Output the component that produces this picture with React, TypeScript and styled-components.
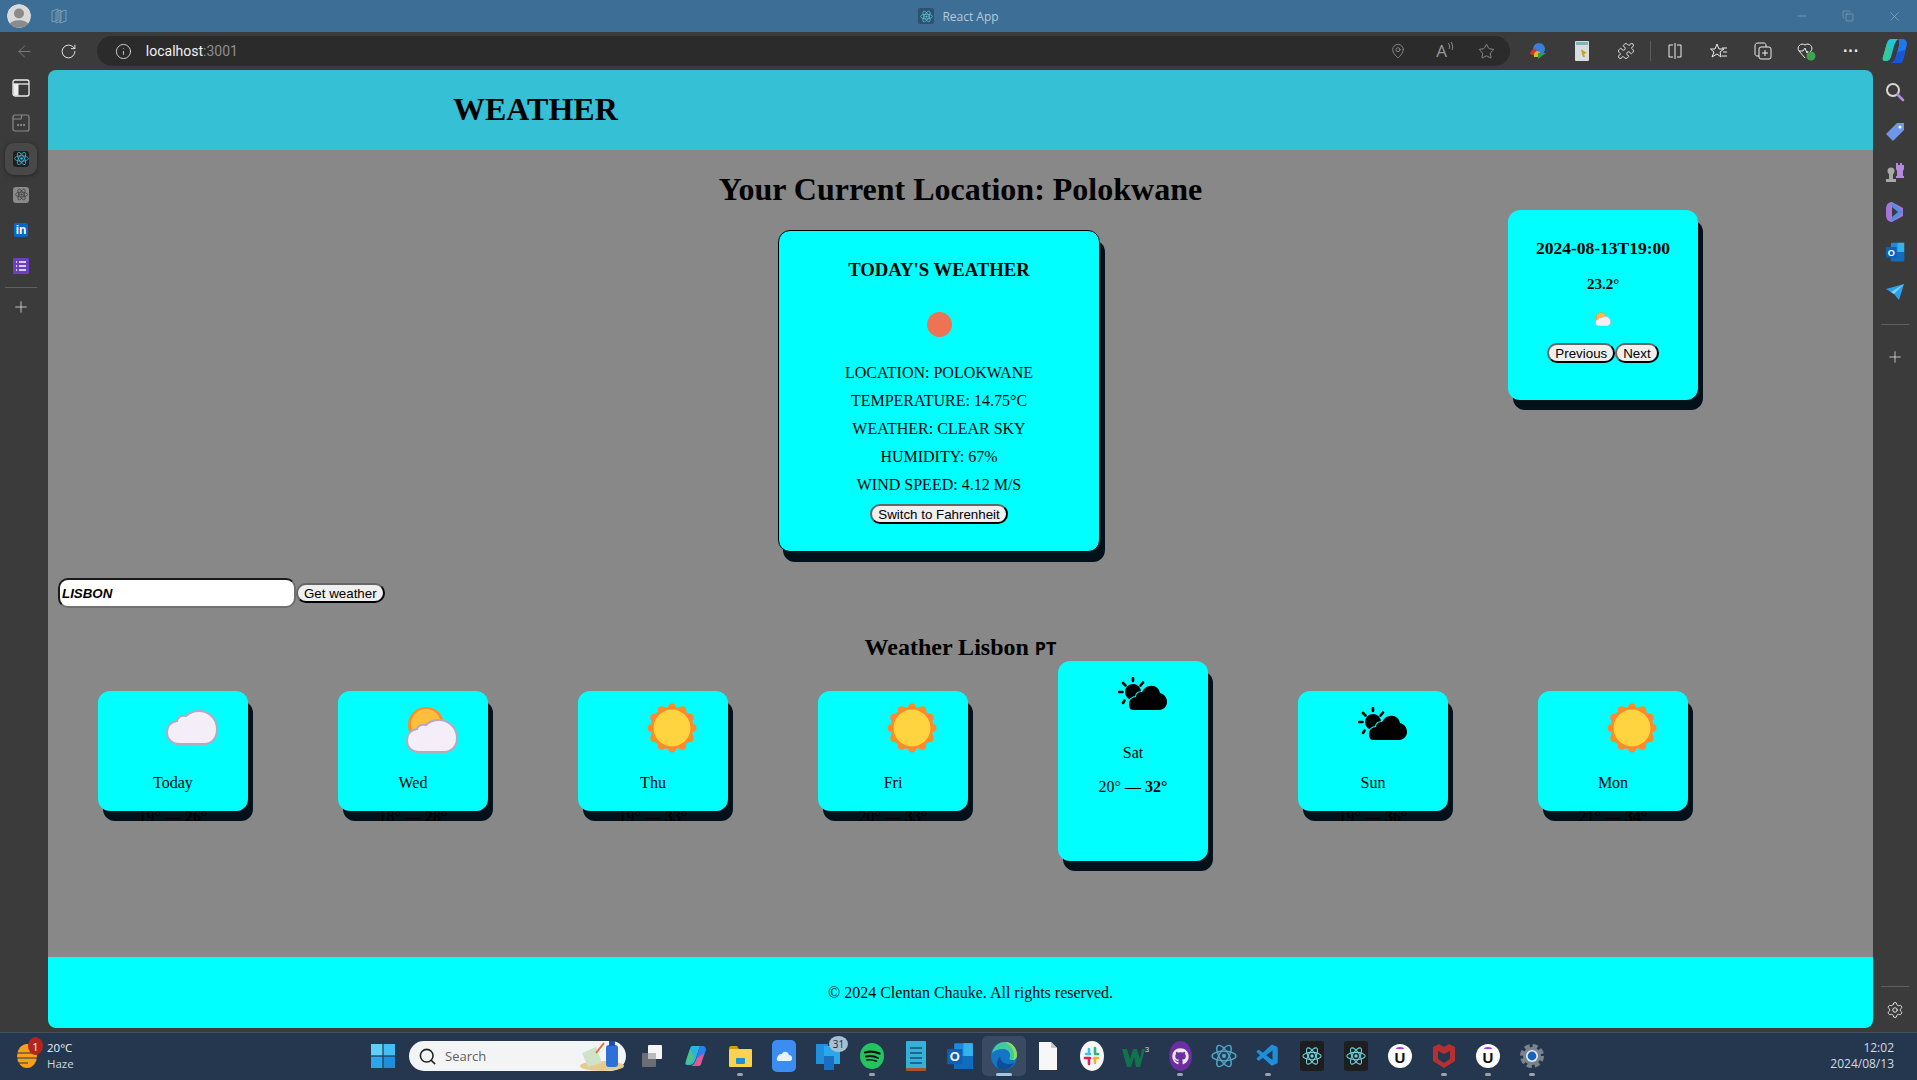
import React from "react";
import styled, { createGlobalStyle } from "styled-components";
import {
  ArrowLeft,
  RotateCw,
  Info,
  MapPin,
  Star,
  Puzzle,
  Plus,
  Settings,
  Search,
  Minus,
  X,
  Copy,
} from "lucide-react";
import { FaGithub } from "react-icons/fa";
import { VscVscode } from "react-icons/vsc";

const GlobalStyle = createGlobalStyle`
  html, body {
    margin: 0;
    padding: 0;
    overflow: hidden;
    background: #3b3b3b;
  }
  * { box-sizing: border-box; }
`;

const Cloud = () => (
  <svg width="52" height="35" viewBox="0 0 52 35">
    <path
      d="M13 34H38C46 34 51 28 51 19C51 9 43 1 33 1C27 1 23 3 20 6C15 5 12 7 11 11C5 12 1 16 1 23C1 29 6 34 13 34Z"
      fill="#f3eef8"
      stroke="#b9a8bf"
      strokeWidth="2"
    />
  </svg>
);

const sunPetals = Array.from({ length: 12 }, (_, i) => (i * Math.PI) / 6);

const Sun = () => (
  <svg width="50" height="50" viewBox="0 0 50 50">
    <circle cx="25" cy="25" r="21.5" fill="#ff8a2b" />
    {sunPetals.map((a) => (
      <circle
        key={a}
        cx={25 + 20.5 * Math.sin(a)}
        cy={25 - 20.5 * Math.cos(a)}
        r="4"
        fill="#ff8a2b"
      />
    ))}
    <circle cx="25" cy="25" r="18.5" fill="#ffd43f" />
  </svg>
);

const SunCloud = ({ size = 52 }: { size?: number }) => (
  <svg width={size} height={(size * 47) / 52} viewBox="0 0 52 47">
    <circle cx="20" cy="19" r="18" fill="#ff8a2b" />
    <circle cx="20" cy="18" r="15" fill="#fbbf3c" />
    <path
      d="M12 46H38C46 46 51 40 51 32C51 22 43 14 33 14C27 14 23 16 20 19C15 18 12 20 11 23C5 24 1 28 1 35C1 41 6 46 12 46Z"
      fill="#f3eef8"
      stroke="#b9a8bf"
      strokeWidth="2"
    />
  </svg>
);

const DarkSunCloud = () => (
  <svg width="50" height="34" viewBox="0 0 50 34">
    <g stroke="#000" strokeWidth="2.6" strokeLinecap="round">
      <path d="M15 1V4M5 6L7.5 8.5M25 5.5L22.5 8.5M1 15H4.5M5 26L6.5 23.5" />
    </g>
    <circle cx="15" cy="15" r="8" fill="#000" />
    <path
      d="M15 33H41C46 33 49 29 49 25C49 20 46 17 42 16C41 11 37 8 32 9C28 9 26 12 24 15C20 15 18 17 18 20C14 20 11 23 11 27C11 30 12 33 15 33Z"
      fill="#000"
      stroke="#0ff"
      strokeWidth="2"
      paintOrder="stroke"
    />
  </svg>
);

const ReactGlyph = ({ color = "#4fa8c9", size = 24 }: { color?: string; size?: number }) => (
  <svg width={size} height={size} viewBox="0 0 24 24" fill="none" stroke={color} strokeWidth="1.3">
    <ellipse cx="12" cy="12" rx="11" ry="4.4" />
    <ellipse cx="12" cy="12" rx="11" ry="4.4" transform="rotate(60 12 12)" />
    <ellipse cx="12" cy="12" rx="11" ry="4.4" transform="rotate(120 12 12)" />
    <circle cx="12" cy="12" r="2" fill={color} stroke="none" />
  </svg>
);

const WinLogo = () => (
  <svg width="24" height="24" viewBox="0 0 24 24">
    <rect x="0" y="0" width="11.4" height="11.4" fill="#5fd0fb" />
    <rect x="12.6" y="0" width="11.4" height="11.4" fill="#45bdf5" />
    <rect x="0" y="12.6" width="11.4" height="11.4" fill="#2ba6ea" />
    <rect x="12.6" y="12.6" width="11.4" height="11.4" fill="#1c8fdd" />
  </svg>
);

const TaskView = () => (
  <svg width="24" height="24" viewBox="0 0 24 24">
    <rect x="2" y="9" width="14" height="14" rx="1" fill="#6b6f75" />
    <rect x="8" y="1" width="14" height="14" rx="1" fill="#f5f5f5" />
    <rect x="8" y="9" width="8" height="6" fill="#b9bbbf" />
  </svg>
);

const CopilotMark = ({ size = 24 }: { size?: number }) => (
  <svg width={size} height={size} viewBox="0 0 24 24">
    <path d="M8 2H16L12 14C11 18 9 21 6 21H3C1 21 1 19 2 17L6 5C6.500 3 7 2 8 2Z" fill="#2bb5d8" />
    <path d="M16 2H19C21 2 22 4 22 6L17 20C16 22 15 22 13 22H7C10 21 11 18 12 15Z" fill="#2a7ff0" />
    <path d="M13 14L20 9L17 20C16 22 15 22 13 22H8C11 20 12 17 13 14Z" fill="#e8568f" />
    <path d="M6 5L10 14L6 20C4 21 2 20 2 17Z" fill="#4cc38a" />
  </svg>
);

const ToolCopilot = () => (
  <svg width="26" height="26" viewBox="0 0 26 26">
    <path d="M9 1H16C14 3 13 5 12 8L9 19C8 22 6 23 4 23H3C1 23 0 21 1 19L5 5C6 2 7 1 9 1Z" fill="#1fc7d4" />
    <path d="M5 5L9 12L7 21C6 23 4 23 3 23C1 23 0 21 1 19Z" fill="#39c79a" />
    <path d="M16 1H20C23 1 25 3 25 6L21 22C20 24 19 25 17 25H9C12 24 13 22 14 19L17 7C17.500 4 17 2 16 1Z" fill="#1e78ee" />
    <path d="M16 14L23 12L21 22C20 24 19 25 17 25H9C12 24 13 22 14 19Z" fill="#1557d6" />
  </svg>
);

const Explorer = () => (
  <svg width="24" height="24" viewBox="0 0 24 24">
    <path d="M1 4C1 3 2 2 3 2H9L11 5H1Z" fill="#d89a10" />
    <rect x="1" y="5" width="23" height="18" rx="1" fill="#fcd34d" />
    <rect x="8" y="14" width="9" height="6" rx="1" fill="#1f8fd8" />
  </svg>
);

const CloudApp = () => (
  <svg width="24" height="32" viewBox="0 0 24 32">
    <rect width="24" height="32" rx="5" fill="#3b8df2" />
    <path d="M6 21H18C21 21 21 15 17 15C16 11 11 11 10 14C6 13 3 20 6 21Z" fill="#e8f2fe" />
  </svg>
);

const TodoApp = () => (
  <svg width="24" height="30" viewBox="0 0 24 30">
    <rect x="0" y="3" width="12" height="20" fill="#1f8fe0" />
    <rect x="8" y="5" width="16" height="18" fill="#2aa8ea" />
    <rect x="8" y="15" width="10" height="14" fill="#1b6fc0" />
  </svg>
);

const Spotify = () => (
  <svg width="26" height="26" viewBox="0 0 26 26" fill="none">
    <ellipse cx="13" cy="13" rx="12" ry="13" fill="#21c45d" />
    <g stroke="#111" strokeLinecap="round">
      <path d="M6 9.500C11 8 16 8.500 20.500 10.500" strokeWidth="2.200" />
      <path d="M7 13.500C11 12.500 15 13 19 15" strokeWidth="1.900" />
      <path d="M8 17C11 16.300 14 16.700 17.500 18.200" strokeWidth="1.600" />
    </g>
  </svg>
);

const Notepad = () => (
  <svg width="20" height="32" viewBox="0 0 20 32">
    <rect y="1" width="20" height="29" rx="1" fill="#37b0d8" />
    <rect y="28" width="20" height="3" fill="#a8532a" />
    <path d="M4 8H16M4 13H16M4 18H16M4 23H16" stroke="#14507a" strokeWidth="1.600" />
  </svg>
);

const Outlook = ({ size = 24 }: { size?: number }) => (
  <svg width={size} height={size} viewBox="0 0 24 24">
    <rect x="7" y="1" width="16" height="22" rx="1" fill="#1a8be0" />
    <rect x="15" y="1" width="8" height="11" fill="#35b1ee" />
    <rect x="7" y="12" width="16" height="11" fill="#0f6cbf" />
    <rect x="1" y="6" width="13" height="13" rx="1" fill="#0f5fb3" />
    <text x="7.500" y="16.500" fontSize="11" fontWeight="700" fill="#fff" textAnchor="middle" fontFamily="Liberation Sans, sans-serif">
      O
    </text>
  </svg>
);

const Edge = () => (
  <svg width="26" height="28" viewBox="0 0 26 28">
    <ellipse cx="13" cy="14" rx="13" ry="14" fill="#1475c4" />
    <path d="M1 11C3 3 9 0 14 0C21 0 26 6 26 13C26 18 21 19 18 17C21 13 18 7 12 7C7 7 3 9 1 11Z" fill="#41c9a0" />
    <path d="M14 0C21 0 26 6 26 13C26 16 24 18 22 18C25 12 22 4 14 0Z" fill="#8fdc5a" />
    <path d="M9 14C9 20 15 24 23 21C20 26 16 28 13 28C6 28 3 22 9 14Z" fill="#0c4f98" />
  </svg>
);

const FileIcon = () => (
  <svg width="18" height="30" viewBox="0 0 18 30">
    <path d="M0 1H12L18 7V29H0Z" fill="#f7f7f7" />
    <path d="M12 1L18 7H12Z" fill="#c9c9c9" />
  </svg>
);

const Slack = () => (
  <svg width="24" height="30" viewBox="0 0 24 30">
    <ellipse cx="12" cy="15" rx="12" ry="15" fill="#f6f6f6" />
    <g strokeWidth="2.600" strokeLinecap="round">
      <path d="M9 8V12M6 13H10" stroke="#36c5f0" />
      <path d="M15 7V12M15 13H18" stroke="#2eb67d" />
      <path d="M15 22V18M18 17H14" stroke="#ecb22e" />
      <path d="M9 23V18M5 17H10" stroke="#e01e5a" />
    </g>
  </svg>
);

const WThree = () => (
  <svg width="28" height="24" viewBox="0 0 28 24">
    <path d="M0 5H5L8 15L11 5H15L18 15L20 5H23L18 23H14L12 13L9 23H5Z" fill="#11734b" />
    <text x="25" y="8" fontSize="8" fill="#cfd8dc" textAnchor="middle" fontFamily="Liberation Sans, sans-serif">
      3
    </text>
  </svg>
);

const GithubApp = () => (
  <GithubBadge>
    <FaGithub size={17} color="#efe7f6" />
  </GithubBadge>
);

const ReactTile = () => (
  <ReactBox>
    <ReactGlyph color="#6fd3e0" size={20} />
  </ReactBox>
);

const Udemy = () => (
  <UdemyBadge>
    <UdemyHat />
    U
  </UdemyBadge>
);

const Mcafee = () => (
  <svg width="22" height="24" viewBox="0 0 22 24">
    <path d="M0 3L6 0L11 3L16 0L22 3V17L11 24L0 17Z" fill="#b82f2f" />
    <path d="M5 7L11 10L17 7V15L11 19L5 15Z" fill="#25364f" />
  </svg>
);

const GearApp = () => (
  <svg width="24" height="24" viewBox="0 0 24 24">
    <circle cx="12" cy="12" r="10" fill="none" stroke="#7b838d" strokeWidth="4" strokeDasharray="5 2.900" />
    <circle cx="12" cy="12" r="9" fill="#7b838d" />
    <circle cx="12" cy="12" r="6" fill="#e8edf2" />
    <circle cx="12" cy="12" r="4.400" fill="#1565c0" />
  </svg>
);

const taskApps = [
  { id: "view", icon: <TaskView /> },
  { id: "copilot", icon: <CopilotMark /> },
  { id: "files", icon: <Explorer />, running: true },
  { id: "cloud", icon: <CloudApp /> },
  { id: "todo", icon: <TodoApp />, badge: "31" },
  { id: "spotify", icon: <Spotify />, running: true },
  { id: "notes", icon: <Notepad /> },
  { id: "outlook", icon: <Outlook size={28} /> },
  { id: "edge", icon: <Edge />, running: true, active: true },
  { id: "file", icon: <FileIcon /> },
  { id: "slack", icon: <Slack /> },
  { id: "w3", icon: <WThree /> },
  { id: "github", icon: <GithubApp />, running: true },
  { id: "react", icon: <ReactGlyph size={26} /> },
  { id: "code", icon: <VscVscode size={26} color="#1e8fd8" />, running: true },
  { id: "react2", icon: <ReactTile /> },
  { id: "react3", icon: <ReactTile /> },
  { id: "udemy", icon: <Udemy /> },
  { id: "mcafee", icon: <Mcafee />, running: true },
  { id: "udemy2", icon: <Udemy />, running: true },
  { id: "gear", icon: <GearApp />, running: true },
];

const forecast = [
  { day: "Today", low: 19, high: 26, icon: <Cloud />, left: 68, top: 7 },
  { day: "Wed", low: 18, high: 28, icon: <SunCloud />, left: 68, top: 3 },
  { day: "Thu", low: 19, high: 33, icon: <Sun />, left: 69, top: 0 },
  { day: "Fri", low: 20, high: 33, icon: <Sun />, left: 69, top: 0 },
  { day: "Sat", low: 20, high: 32, icon: <DarkSunCloud />, left: 60, top: 4, hovered: true },
  { day: "Sun", low: 19, high: 36, icon: <DarkSunCloud />, left: 60, top: 4 },
  { day: "Mon", low: 21, high: 34, icon: <Sun />, left: 69, top: 0 },
];

const leftRail = [
  <svg key="a" width="18" height="18" viewBox="0 0 18 18" fill="none">
    <rect x="1" y="1" width="16" height="16" rx="2" stroke="#eee" strokeWidth="1.300" />
    <path d="M1 5H17" stroke="#eee" strokeWidth="1.300" />
    <rect x="1.500" y="5" width="5" height="11.500" fill="#eee" />
  </svg>,
  <svg key="b" width="18" height="18" viewBox="0 0 18 18" fill="none">
    <rect x="1" y="1" width="16" height="16" rx="2" stroke="#8a8a8a" strokeWidth="1.200" />
    <path d="M1 5H9L10 1" stroke="#8a8a8a" strokeWidth="1.200" />
    <path d="M5 11H7M8 11H10M11 11H13" stroke="#9a9a9a" strokeWidth="1.500" />
  </svg>,
];

const App = () => {
  return (
    <Desktop>
      <GlobalStyle />
      <TitleBar>
        <TitleLeft>
          <Avatar>
            <svg width="24" height="24" viewBox="0 0 24 24">
              <circle cx="12" cy="12" r="12" fill="#d9d9d9" />
              <circle cx="12" cy="9.500" r="5" fill="#8b8b8b" />
              <path d="M3 20C5 15 19 15 21 20C17 25 7 25 3 20Z" fill="#8b8b8b" />
            </svg>
          </Avatar>
          <svg width="18" height="18" viewBox="0 0 18 18" fill="none" stroke="#7f9bb4" strokeWidth="1">
            <path d="M2 4L8 2V13L2 15ZM6 5L11 3V14L6 16ZM10 5L16 3V14L10 16Z" />
          </svg>
        </TitleLeft>
        <TitleCenter>
          <FaviconBox>
            <ReactGlyph color="#62c6dc" size={13} />
          </FaviconBox>
          React App
        </TitleCenter>
        <WindowControls>
          <WindowButton>
            <Minus size={14} strokeWidth={1} />
          </WindowButton>
          <WindowButton>
            <Copy size={12} strokeWidth={1} />
          </WindowButton>
          <WindowButton>
            <X size={15} strokeWidth={1} />
          </WindowButton>
        </WindowControls>
      </TitleBar>

      <Toolbar>
        <NavButton>
          <ArrowLeft size={19} strokeWidth={1} color="#8c8c8c" />
        </NavButton>
        <NavButton>
          <RotateCw size={17} strokeWidth={1.300} color="#f2f2f2" />
        </NavButton>
        <AddressBar>
          <Info size={17} strokeWidth={1.200} color="#e4e4e4" />
          <Url>
            localhost<UrlPort>:3001</UrlPort>
          </Url>
          <AddressIcons>
            <MapPin size={16} strokeWidth={1.200} color="#999" />
            <ReadAloud>
              A
              <svg width="7" height="10" viewBox="0 0 7 10" fill="none" stroke="#999" strokeWidth="0.900">
                <path d="M1 1C3 3 3 5 2 7M4 0C6 3 6 6 5 8" />
              </svg>
            </ReadAloud>
            <Star size={17} strokeWidth={1.200} color="#999" />
          </AddressIcons>
        </AddressBar>
        <ToolIcons>
          <ToolSlot>
            <svg width="18" height="18" viewBox="0 0 18 18">
              <circle cx="10" cy="7" r="6" fill="#3b7dd8" />
              <path d="M1 12C2 7 6 6 8 7L5 13Z" fill="#d8362a" />
              <path d="M5 15C4 10 8 8 11 10L9 15Z" fill="#e4b42a" />
              <path d="M9 17L17 11L9 11Z" fill="#2ea043" />
            </svg>
          </ToolSlot>
          <ToolSlot>
            <svg width="14" height="20" viewBox="0 0 14 20">
              <rect width="14" height="20" rx="1" fill="#d7dde0" />
              <rect x="1" y="1" width="12" height="3" fill="#7fb4b8" />
              <path d="M6 8L12 12L9 13L10 16L8 16L7 13Z" fill="#c9a416" />
            </svg>
          </ToolSlot>
          <ToolSlot>
            <Puzzle size={18} strokeWidth={1.200} color="#eee" />
          </ToolSlot>
          <ToolDivider />
          <ToolSlot>
            <svg width="16" height="16" viewBox="0 0 16 16" fill="none" stroke="#eee" strokeWidth="1">
              <path d="M6 2H2V14H6M10 2H14V14H10M8 0V16" />
            </svg>
          </ToolSlot>
          <ToolSlot>
            <svg width="18" height="18" viewBox="0 0 18 18" fill="none" stroke="#eee" strokeWidth="1">
              <path d="M7 2L9 7H14L10 10L11 15L7 12L2 15L4 10L0.500 7H5Z" />
              <path d="M12 6H17M13 10H17M12 14H17" />
            </svg>
          </ToolSlot>
          <ToolSlot>
            <svg width="18" height="18" viewBox="0 0 18 18" fill="none" stroke="#eee" strokeWidth="1">
              <rect x="5" y="5" width="12" height="12" rx="2" />
              <path d="M11 8V14M8 11H14M5 14H3C2 14 1 13 1 12V4C1 2 2 1 4 1H10C11 1 12 2 12 3V5" />
            </svg>
          </ToolSlot>
          <ToolSlot>
            <svg width="19" height="19" viewBox="0 0 19 19" fill="none">
              <path d="M8 16L2 9C-1 5 4 0 8 3C12 0 17 5 14 9L13 10" stroke="#eee" />
              <path d="M2 9H6L8 6L10 11L11 9" stroke="#eee" />
              <circle cx="14" cy="14" r="4.500" fill="#3fa34d" />
            </svg>
          </ToolSlot>
          <ToolSlot>
            <Dots>···</Dots>
          </ToolSlot>
          <ToolSlot>
            <ToolCopilot />
          </ToolSlot>
        </ToolIcons>
      </Toolbar>

      <Middle>
        <LeftRail>
          {leftRail.map((icon, i) => (
            <RailCell key={i}>{icon}</RailCell>
          ))}
          <RailCell>
            <ActiveTile>
              <ReactBox $small>
                <ReactGlyph color="#45b5d8" size={15} />
              </ReactBox>
            </ActiveTile>
          </RailCell>
          <RailCell>
            <ChatTile>
              <ReactGlyph color="#3a3a3a" size={13} />
            </ChatTile>
          </RailCell>
          <RailCell>
            <LinkedTile>in</LinkedTile>
          </RailCell>
          <RailCell>
            <svg width="16" height="16" viewBox="0 0 16 16">
              <rect width="16" height="16" rx="1" fill="#6a3fc0" />
              <path d="M6 4H13M6 8H13M6 12H13" stroke="#fff" strokeWidth="1.500" />
              <path d="M3 4H4M3 8H4M3 12H4" stroke="#fff" strokeWidth="1.500" />
            </svg>
          </RailCell>
          <RailRule />
          <Plus size={18} strokeWidth={1} color="#eee" />
        </LeftRail>

        <Page>
          <Header>
            <Brand>WEATHER</Brand>
          </Header>
          <Main>
            <LocationTitle>Your Current Location: Polokwane</LocationTitle>
            <Panels>
              <TodayCard>
                <TodayTitle>TODAY'S WEATHER</TodayTitle>
                <SunDot />
                <Facts>
                  <Fact>LOCATION: POLOKWANE</Fact>
                  <Fact>TEMPERATURE: 14.75°C</Fact>
                  <Fact>WEATHER: CLEAR SKY</Fact>
                  <Fact>HUMIDITY: 67%</Fact>
                  <Fact>WIND SPEED: 4.12 M/S</Fact>
                </Facts>
                <PillButton>Switch to Fahrenheit</PillButton>
              </TodayCard>
              <HourCard>
                <HourTitle>2024-08-13T19:00</HourTitle>
                <HourTemp>23.2°</HourTemp>
                <HourIcon>
                  <SunCloud size={16} />
                </HourIcon>
                <HourButtons>
                  <PillButton>Previous</PillButton>
                  <PillButton>Next</PillButton>
                </HourButtons>
              </HourCard>
            </Panels>
            <SearchRow>
              <CityInput defaultValue="LISBON" />
              <PillButton>Get weather</PillButton>
            </SearchRow>
            <ForecastTitle>
              Weather Lisbon <Flag>PT</Flag>
            </ForecastTitle>
            <ForecastRow>
              {forecast.map((d) => (
                <DayCard key={d.day} $hovered={d.hovered}>
                  <DayIcon $left={d.left} $top={d.top}>
                    {d.icon}
                  </DayIcon>
                  <DayName>{d.day}</DayName>
                  <DayTemps>
                    {d.low}° — <b>{d.high}°</b>
                  </DayTemps>
                </DayCard>
              ))}
            </ForecastRow>
          </Main>
          <Footer>© 2024 Clentan Chauke. All rights reserved.</Footer>
        </Page>

        <RightRail>
          <SideCell>
            <svg width="20" height="20" viewBox="0 0 20 20" fill="none">
              <circle cx="8" cy="8" r="6" stroke="#d8d8d8" strokeWidth="2" />
              <path d="M12.500 12.500L18 18" stroke="#b58ae0" strokeWidth="2.600" strokeLinecap="round" />
            </svg>
          </SideCell>
          <SideCell>
            <svg width="20" height="20" viewBox="0 0 20 20">
              <path d="M12 1H19V8L8 19L1 12Z" fill="#6f96e8" />
              <circle cx="15" cy="5" r="1.500" fill="#fff" />
            </svg>
          </SideCell>
          <SideCell>
            <svg width="20" height="22" viewBox="0 0 20 22">
              <circle cx="6" cy="10" r="3.500" fill="#a8a8a8" />
              <path d="M4 13H8V18H11V21H1V18H4Z" fill="#a8a8a8" />
              <path d="M11 2H13V4H15V2H17V4H19V2V8L18 10V15H19V17H11V15H12V10L11 8Z" fill="#b58ae0" />
            </svg>
          </SideCell>
          <SideCell>
            <svg width="20" height="22" viewBox="0 0 20 22">
              <path d="M7 1L18 7V15L7 21C3 21 1 18 1 14V8C1 4 3 1 7 1Z" fill="#a874d8" />
              <path d="M7 1L18 11L7 21Z" fill="#4f8fe8" />
              <path d="M7 6L13 11L7 16Z" fill="#3b3b3b" />
            </svg>
          </SideCell>
          <SideCell>
            <Outlook size={20} />
          </SideCell>
          <SideCell>
            <svg width="18" height="16" viewBox="0 0 18 16">
              <path d="M0 5L18 0L13 16L8 10Z" fill="#2aa3ee" />
              <path d="M8 10L18 0L5 8Z" fill="#7fd0f8" />
            </svg>
          </SideCell>
          <SideRule />
          <SideCell>
            <Plus size={18} strokeWidth={1} color="#eee" />
          </SideCell>
          <SettingsBlock>
            <SettingsRule />
            <SideCell>
              <Settings size={18} strokeWidth={1.200} color="#f0f0f0" />
            </SideCell>
          </SettingsBlock>
        </RightRail>
      </Middle>

      <Taskbar>
        <TrayWeather>
          <HazeIcon>
            <svg width="22" height="26" viewBox="0 0 22 26">
              <ellipse cx="11" cy="13" rx="10" ry="12" fill="#f7a11a" />
              <path d="M0 10H18M0 15H22M2 20H12" stroke="#25364f" strokeWidth="1.200" />
            </svg>
            <Badge>1</Badge>
          </HazeIcon>
          <TrayWeatherText>
            <span>20°C</span>
            <TrayDim>Haze</TrayDim>
          </TrayWeatherText>
        </TrayWeather>
        <StartButton>
          <WinLogo />
        </StartButton>
        <SearchPill>
          <Search size={19} strokeWidth={2} color="#222" />
          <SearchLabel>Search</SearchLabel>
          <SearchArt>
            <svg width="46" height="30" viewBox="0 0 46 30">
              <ellipse cx="24" cy="25" rx="22" ry="5" fill="#e8c98f" />
              <path d="M4 12L18 6L24 22L10 26Z" fill="#cfe3c8" />
              <path d="M18 12L26 2" stroke="#e86a33" strokeWidth="2" />
              <rect x="28" y="4" width="12" height="22" rx="3" fill="#2e6fd8" />
              <rect x="31" y="0" width="6" height="5" fill="#1e4fae" />
            </svg>
          </SearchArt>
        </SearchPill>
        <AppStrip>
          {taskApps.map((a) => (
            <TaskSlot key={a.id} $running={a.running} $active={a.active}>
              {a.icon}
              {a.badge && <CountBadge>{a.badge}</CountBadge>}
            </TaskSlot>
          ))}
        </AppStrip>
        <Clock>
          <span>12:02</span>
          <span>2024/08/13</span>
        </Clock>
      </Taskbar>
    </Desktop>
  );
};

export default App;

const Desktop = styled.div`
  width: 1917px;
  height: 1080px;
  display: flex;
  flex-direction: column;
  background: #3b3b3b;
  font-family: "Liberation Serif", "Times New Roman", serif;
`;

const TitleBar = styled.div`
  height: 32px;
  display: grid;
  grid-template-columns: 1fr auto 1fr;
  align-items: center;
  background: #3d6e95;
`;

const TitleLeft = styled.div`
  display: flex;
  align-items: center;
  gap: 19px;
  padding-left: 7px;
`;

const Avatar = styled.div`
  width: 24px;
  height: 24px;
  border-radius: 50%;
  overflow: hidden;
`;

const TitleCenter = styled.div`
  display: flex;
  align-items: center;
  gap: 8px;
  color: #b9c9d8;
  font: 12px "Open Sans", sans-serif;
`;

const FaviconBox = styled.span`
  width: 16px;
  height: 16px;
  display: flex;
  align-items: center;
  justify-content: center;
  background: #2c5270;
  border-radius: 2px;
`;

const WindowControls = styled.div`
  display: flex;
  justify-content: flex-end;
`;

const WindowButton = styled.div`
  width: 46px;
  height: 32px;
  display: flex;
  align-items: center;
  justify-content: center;
  color: #9db4c8;
`;

const Toolbar = styled.div`
  height: 38px;
  display: flex;
  align-items: center;
  padding-left: 3px;
`;

const NavButton = styled.div`
  width: 44px;
  display: flex;
  justify-content: center;
`;

const AddressBar = styled.div`
  width: 1416px;
  height: 30px;
  margin-left: 6px;
  padding: 0 15px 0 18px;
  display: flex;
  align-items: center;
  background: #2b2b2b;
  border-radius: 15px;
`;

const Url = styled.div`
  margin-left: 14px;
  color: #f2f2f2;
  font: 14px Roboto, sans-serif;
`;

const UrlPort = styled.span`
  color: #8f8f8f;
`;

const AddressIcons = styled.div`
  margin-left: auto;
  display: flex;
  align-items: center;
  gap: 30px;
  color: #999;
`;

const ReadAloud = styled.div`
  margin-right: -6px;
  display: flex;
  align-items: flex-start;
  font: 17px "Open Sans", sans-serif;
  line-height: 18px;
`;

const ToolIcons = styled.div`
  display: flex;
  align-items: center;
  margin-left: 6px;
`;

const ToolSlot = styled.div`
  width: 44px;
  display: flex;
  justify-content: center;
`;

const ToolDivider = styled.div`
  width: 1px;
  height: 20px;
  margin: 0 2px;
  background: #5c5c5c;
`;

const Dots = styled.span`
  color: #eee;
  font: bold 16px "Liberation Sans", sans-serif;
`;

const Middle = styled.div`
  height: 962px;
  display: flex;
`;

const LeftRail = styled.div`
  width: 48px;
  padding-right: 6px;
  display: flex;
  flex-direction: column;
  align-items: center;
`;

const RailCell = styled.div`
  width: 100%;
  height: 35.6px;
  display: flex;
  align-items: center;
  justify-content: center;
`;

const ActiveTile = styled.div`
  width: 32px;
  height: 32px;
  display: flex;
  align-items: center;
  justify-content: center;
  background: #484848;
  border-radius: 9px;
  box-shadow: 0 1px 4px rgba(0, 0, 0, 0.4);
`;

const ChatTile = styled.div`
  width: 16px;
  height: 16px;
  display: flex;
  align-items: center;
  justify-content: center;
  background: #8a8a8a;
  border-radius: 3px;
`;

const LinkedTile = styled.div`
  width: 14px;
  height: 14px;
  display: flex;
  align-items: center;
  justify-content: center;
  color: #fff;
  background: #0a66c2;
  border-radius: 2px;
  font: bold 12px "Liberation Sans", sans-serif;
`;

const RailRule = styled.div`
  width: 32px;
  height: 1px;
  margin: 3px 0 10px;
  background: #5f5f5f;
`;

const Page = styled.div`
  width: 1825px;
  height: 958px;
  display: flex;
  flex-direction: column;
  border-radius: 8px;
  overflow: hidden;
`;

const Header = styled.header`
  height: 80px;
  flex: none;
  padding: 0 0 2px 405px;
  display: flex;
  align-items: center;
  background: #35c0d5;
`;

const Brand = styled.h1`
  margin: 0;
  font-size: 32px;
  font-weight: 700;
`;

const Main = styled.main`
  flex: 1;
  padding-top: 19px;
  background: #888888;
`;

const LocationTitle = styled.h1`
  margin: 0 0 1px;
  font-size: 32px;
  line-height: 40px;
  text-align: center;
`;

const Panels = styled.div`
  height: 351px;
  padding-left: 730px;
  display: flex;
  align-items: flex-start;
  gap: 408px;
`;

const TodayCard = styled.section`
  width: 322px;
  height: 322px;
  margin-top: 20px;
  padding-top: 29px;
  display: flex;
  flex-direction: column;
  align-items: center;
  background: #00ffff;
  border: 1px solid #000;
  border-radius: 12px;
  box-shadow: 5px 10px 0 #03121a;
`;

const TodayTitle = styled.h2`
  margin: 0;
  font-size: 18.72px;
  line-height: 20px;
`;

const SunDot = styled.div`
  width: 25px;
  height: 25px;
  margin-top: 32px;
  background: #ed7354;
  border-radius: 50%;
`;

const Facts = styled.div`
  margin-top: 22px;
  text-align: center;
`;

const Fact = styled.div`
  font-size: 16px;
  line-height: 28px;
`;

const PillButton = styled.button`
  height: 20px;
  margin-top: 5px;
  padding: 0 6px;
  color: #000;
  background: #efefef;
  border: 2px solid;
  border-color: #666 #000 #000 #666;
  border-radius: 10px;
  font: 13.333px "Liberation Sans", Arial, sans-serif;
`;

const HourCard = styled.section`
  width: 190px;
  height: 190px;
  padding-top: 28px;
  display: flex;
  flex-direction: column;
  align-items: center;
  background: #00ffff;
  border-radius: 12px;
  box-shadow: 5px 10px 0 #03121a;
`;

const HourTitle = styled.h3`
  margin: 0;
  font-size: 17.5px;
  line-height: 20px;
`;

const HourTemp = styled.div`
  margin-top: 17px;
  font-size: 15px;
  font-weight: 700;
  line-height: 18px;
`;

const HourIcon = styled.div`
  height: 16px;
  margin-top: 19px;
`;

const HourButtons = styled.div`
  margin-top: 10px;
  display: flex;
`;

const SearchRow = styled.div`
  margin-top: 17px;
  padding-left: 10px;
  display: flex;
  align-items: center;
  button {
    margin-top: 0;
  }
`;

const CityInput = styled.input`
  width: 238px;
  height: 30px;
  padding: 0 2px;
  color: #000;
  background: #fff;
  border: 2px solid;
  border-color: #1a1a1a #707070 #707070 #1a1a1a;
  border-radius: 10px;
  outline: none;
  font: italic bold 13.333px "Liberation Sans", Arial, sans-serif;
`;

const ForecastTitle = styled.h2`
  margin: 24px 0 0;
  font-size: 24px;
  line-height: 30px;
  text-align: center;
`;

const Flag = styled.span`
  font: bold 18px "Noto Sans", sans-serif;
`;

const ForecastRow = styled.div`
  margin-top: 29px;
  padding-left: 50px;
  display: flex;
  align-items: flex-start;
  gap: 90px;
`;

const DayCard = styled.article<{ $hovered?: boolean }>`
  width: 150px;
  height: ${(p) => (p.$hovered ? "200px" : "120px")};
  margin-top: ${(p) => (p.$hovered ? "-30px" : "0")};
  padding-top: 12px;
  display: flex;
  flex-direction: column;
  align-items: center;
  background: #00ffff;
  border-radius: 12px;
  box-shadow: 5px 10px 0 #03121a;
  clip-path: inset(0 -5px -10px 0);
`;

const DayIcon = styled.div<{ $left: number; $top: number }>`
  width: 52px;
  height: 50px;
  flex: none;
  align-self: flex-start;
  margin-left: ${(p) => p.$left}px;
  padding-top: ${(p) => p.$top}px;
`;

const DayName = styled.div`
  flex: none;
  margin-top: 21px;
  font-size: 16px;
  line-height: 18px;
`;

const DayTemps = styled.div`
  flex: none;
  margin-top: 16px;
  font-size: 16px;
  line-height: 18px;
`;

const Footer = styled.footer`
  height: 71px;
  flex: none;
  padding-left: 20px;
  display: flex;
  align-items: center;
  justify-content: center;
  background: #00ffff;
  font-size: 16px;
`;

const RightRail = styled.div`
  width: 44px;
  padding-top: 2px;
  display: flex;
  flex-direction: column;
  align-items: center;
`;

const SideCell = styled.div`
  width: 100%;
  height: 40px;
  display: flex;
  align-items: center;
  justify-content: center;
`;

const SideRule = styled.div`
  width: 28px;
  height: 1px;
  margin: 12px 0;
  background: #5f5f5f;
`;

const SettingsRule = styled(SideRule)`
  margin-bottom: 3px;
`;

const SettingsBlock = styled.div`
  width: 100%;
  margin-top: auto;
  display: flex;
  flex-direction: column;
  align-items: center;
  padding-bottom: 2px;
`;

const Taskbar = styled.div`
  height: 48px;
  padding-bottom: 1px;
  display: flex;
  align-items: center;
  background: #25364f;
  border-top: 1px solid #46505f;
`;

const TrayWeather = styled.div`
  width: 361px;
  padding-left: 16px;
  display: flex;
  align-items: center;
  gap: 9px;
`;

const HazeIcon = styled.div`
  position: relative;
  height: 26px;
`;

const Badge = styled.span`
  position: absolute;
  top: -6px;
  right: -5px;
  width: 15px;
  height: 18px;
  display: flex;
  align-items: center;
  justify-content: center;
  color: #fff;
  background: #b3261e;
  border-radius: 50%;
  font: 11px "Open Sans", sans-serif;
`;

const TrayWeatherText = styled.div`
  display: flex;
  flex-direction: column;
  color: #f2f2f2;
  font: 11.5px/16px "Open Sans", sans-serif;
`;

const TrayDim = styled.span`
  color: #cfd5dd;
`;

const StartButton = styled.div`
  width: 44px;
  display: flex;
  justify-content: center;
`;

const SearchPill = styled.div`
  width: 217px;
  height: 30px;
  margin: 0 4px;
  padding-left: 9px;
  display: flex;
  align-items: center;
  background: #f3f4f6;
  border-radius: 15px;
`;

const SearchLabel = styled.span`
  margin-left: 8px;
  color: #5f5f5f;
  font: 13px "Open Sans", sans-serif;
`;

const SearchArt = styled.span`
  margin-left: auto;
  margin-right: 2px;
  display: flex;
`;

const AppStrip = styled.div`
  display: flex;
`;

const TaskSlot = styled.div<{ $running?: boolean; $active?: boolean }>`
  position: relative;
  width: 44px;
  height: 40px;
  display: flex;
  align-items: center;
  justify-content: center;
  background: ${(p) => (p.$active ? "#3a4a62" : "transparent")};
  border-radius: 5px;
  &::after {
    content: "";
    display: ${(p) => (p.$running ? "block" : "none")};
    position: absolute;
    bottom: 0;
    left: 50%;
    width: ${(p) => (p.$active ? "16px" : "6px")};
    height: 3px;
    transform: translateX(-50%);
    background: ${(p) => (p.$active ? "#9fc7e4" : "#9aa3ae")};
    border-radius: 2px;
  }
`;

const CountBadge = styled.span`
  position: absolute;
  top: 0;
  right: 2px;
  width: 19px;
  height: 16px;
  display: flex;
  align-items: center;
  justify-content: center;
  color: #1b2a40;
  background: #a6bfd2;
  border-radius: 50%;
  font: 10px "Open Sans", sans-serif;
`;

const GithubBadge = styled.span`
  width: 23px;
  height: 30px;
  display: flex;
  align-items: center;
  justify-content: center;
  background: #6b2fa0;
  border-radius: 50%;
`;

const ReactBox = styled.span<{ $small?: boolean }>`
  width: ${(p) => (p.$small ? "16px" : "24px")};
  height: ${(p) => (p.$small ? "16px" : "30px")};
  display: flex;
  align-items: center;
  justify-content: center;
  background: #1e1e1e;
  border-radius: 3px;
`;

const UdemyBadge = styled.span`
  position: relative;
  width: 24px;
  height: 24px;
  display: flex;
  align-items: flex-end;
  justify-content: center;
  color: #111;
  background: #fff;
  border-radius: 50%;
  font: bold 15px/20px "Liberation Sans", sans-serif;
`;

const UdemyHat = styled.span`
  position: absolute;
  top: 3px;
  left: 8px;
  width: 8px;
  height: 4px;
  border-top: 2px solid #a435f0;
  border-radius: 50%;
`;

const Clock = styled.div`
  margin-left: auto;
  padding-right: 23px;
  display: flex;
  flex-direction: column;
  align-items: flex-end;
  color: #d5dae1;
  font: 12px/16px "Open Sans", sans-serif;
`;
